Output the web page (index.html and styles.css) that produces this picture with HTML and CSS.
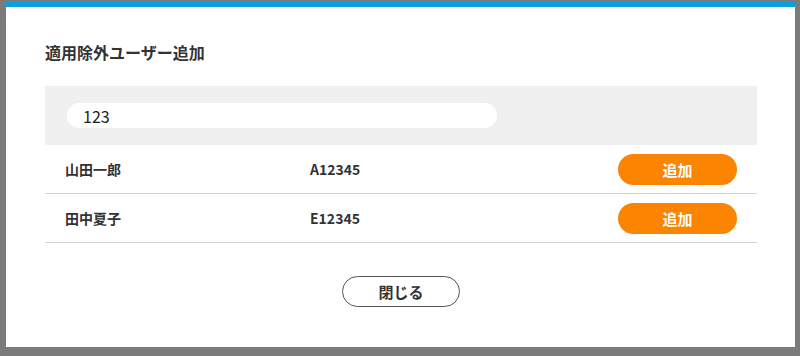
FILE: index.html
```html
<!DOCTYPE html>
<html>
<head>
  <title>適用除外ユーザー追加</title>
  <link rel="stylesheet" href="styles.css">
</head>
<body>
  <div class="overlay">
    <!-- Modal -->
    <div class="modal">
      <h2 class="modal-title">適用除外ユーザー追加</h2>
      <!-- Search -->
      <div class="search-box">
        <input type="text" class="search-input" value="123">
      </div>
      <!-- Results -->
      <div class="result-list">
        <div class="result-row">
          <span class="user-name">山田一郎</span>
          <span class="user-id">A12345</span>
          <button class="add-btn">追加</button>
        </div>
        <div class="result-row">
          <span class="user-name">田中夏子</span>
          <span class="user-id">E12345</span>
          <button class="add-btn">追加</button>
        </div>
      </div>
      <!-- Footer -->
      <div class="modal-footer">
        <button class="close-btn">閉じる</button>
      </div>
    </div>
  </div>
</body>
</html>
```

FILE: styles.css
```css
/* modal styles */
body {
  margin: 0;
  background-color: #7b7b7b;
  font-family: "Noto Sans CJK JP", "Noto Sans", sans-serif;
  color: #333;
}
.overlay {
  height: 356px;
  padding: 2px 5px 0 6px;
  box-sizing: border-box;
}
.modal {
  background-color: #fff;
  border-top: 5px solid #0aa0dd;
  height: 345px;
  box-sizing: border-box;
  padding: 34px 38px 0 39px;
}
.modal-title {
  margin: 0 0 23px;
  font-size: 16px;
  line-height: 22px;
  font-weight: 700;
}
.search-box {
  background-color: #f0f0f0;
  padding: 17px 22px;
}
.search-input {
  display: block;
  width: 430px;
  height: 25px;
  box-sizing: border-box;
  border: none;
  border-radius: 13px;
  padding: 0 16px;
  font-family: inherit;
  font-size: 16px;
  color: #222;
  background-color: #fff;
  outline: none;
}
.result-row {
  display: flex;
  align-items: center;
  height: 49px;
  box-sizing: border-box;
  border-bottom: 1px solid #d3d3d3;
  padding: 0 20px;
  font-size: 14px;
  font-weight: 700;
}
.user-name {
  width: 245px;
}
.user-id {
  flex: 1;
}
.add-btn {
  width: 119px;
  height: 31px;
  border: none;
  border-radius: 16px;
  background-color: #fb8500;
  color: #fff;
  font-family: inherit;
  font-size: 15px;
  font-weight: 700;
  cursor: pointer;
}
.modal-footer {
  display: flex;
  justify-content: center;
  padding-top: 33px;
}
.close-btn {
  width: 118px;
  height: 31px;
  border: 1px solid #555;
  border-radius: 16px;
  background-color: #fff;
  color: #333;
  font-family: inherit;
  font-size: 15px;
  font-weight: 700;
  cursor: pointer;
}
```
